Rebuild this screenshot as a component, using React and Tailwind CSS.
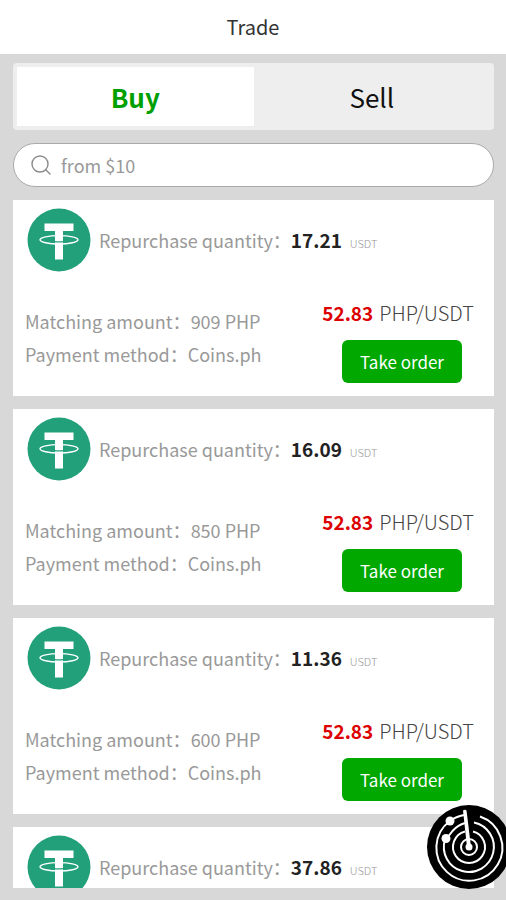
import { useState } from 'react';

const orders = [
  { id: 1, quantity: '17.21', amount: '909 PHP', method: 'Coins.ph', price: '52.83' },
  { id: 2, quantity: '16.09', amount: '850 PHP', method: 'Coins.ph', price: '52.83' },
  { id: 3, quantity: '11.36', amount: '600 PHP', method: 'Coins.ph', price: '52.83' },
  { id: 4, quantity: '37.86' },
];

function TetherIcon() {
  return (
    <svg viewBox="0 0 64 64" className="size-16 shrink-0" aria-hidden="true">
      <circle cx="32" cy="32" r="31.5" fill="#22a079" />
      <ellipse cx="32" cy="31.8" rx="19" ry="4.2" fill="none" stroke="#fff" strokeWidth="1.4" />
      <path d="M17.5 15.5h29v7.5H36v28.5h-8V23H17.5z" fill="#fff" />
      <path d="M27.5 33.6q4.5.6 9 0" fill="none" stroke="#22a079" strokeWidth="1.2" />
    </svg>
  );
}

function SearchIcon() {
  return (
    <svg viewBox="0 0 20 20" className="size-5 shrink-0" fill="none" stroke="#8c8c8c" strokeWidth="1.4" aria-hidden="true">
      <circle cx="9" cy="9" r="8" />
      <path d="M14.5 14.5l4.5 4.5" strokeLinecap="round" />
    </svg>
  );
}

function RadarIcon() {
  return (
    <svg viewBox="0 0 84 84" className="size-21" fill="none" stroke="#fff" strokeWidth="2" aria-hidden="true">
      <circle cx="42" cy="42" r="42" fill="#000" stroke="none" />
      <circle cx="42" cy="42" r="3.5" fill="#fff" stroke="none" />
      <circle cx="42" cy="42" r="8" />
      <path d="M46 26.5a16 16 0 1 1-8 0" />
      <path d="M47 17.5a25 25 0 1 1-29 17" />
      <path d="M20 33l6-7.5q5-5.5 12-7.5" />
      <path d="M53 11.5a33 33 0 1 1-30 4.5q6-4.5 14-6" />
      <path d="M36 5.5q2-1.5 3.5 0l4.5 36.5h-4z" fill="#fff" stroke="none" />
      <circle cx="23" cy="16" r="4.5" fill="#fff" stroke="none" />
      <circle cx="19" cy="33.5" r="4.5" fill="#fff" stroke="none" />
    </svg>
  );
}

function OrderCard({ order }) {
  return (
    <li className="h-49 shrink-0 bg-white pt-2">
      <div className="flex items-center pl-3.5">
        <TetherIcon />
        <p className="flex items-baseline pl-2 text-lg text-[#999]">
          Repurchase quantity：
          <strong className="text-[19px] font-bold text-[#222]">{order.quantity}</strong>
          <span className="pl-2 text-[11px] font-light">USDT</span>
        </p>
      </div>
      {order.price && (
        <div className="flex justify-between pt-[25px] pr-5 pl-3">
          <div className="pt-2 text-lg leading-[33px] text-[#999]">
            <p>Matching amount：{order.amount}</p>
            <p>Payment method：{order.method}</p>
          </div>
          <div className="flex flex-col items-end">
            <p className="flex items-baseline gap-1.5 text-xl leading-8 font-light text-[#444]">
              <strong className="text-[19px] font-bold text-[#d00]">{order.price}</strong>
              PHP/USDT
            </p>
            <button type="button" className="mt-[11px] mr-3 h-[43px] w-[120px] rounded-md bg-[#00a800] text-[17px] text-white">
              Take order
            </button>
          </div>
        </div>
      )}
    </li>
  );
}

export default function App() {
  const [tab, setTab] = useState('Buy');

  return (
    <div className="flex h-screen flex-col overflow-hidden bg-[#d8d8d8] font-['Noto_Sans_CJK_SC',sans-serif]">
      <header className="flex h-[54px] shrink-0 items-center justify-center bg-white">
        <h1 className="text-xl text-[#333]">Trade</h1>
      </header>
      <main className="flex min-h-0 flex-1 flex-col pt-[9px] pr-3 pb-3 pl-[13px]">
        <div className="flex h-[67px] shrink-0 rounded-sm bg-[#eee] p-1">
          {['Buy', 'Sell'].map((name) => (
            <button
              key={name}
              type="button"
              onClick={() => setTab(name)}
              className={
                tab === name
                  ? 'flex-1 bg-white text-[26px] font-bold text-[#00a000]'
                  : 'flex-1 text-[26px] text-[#111]'
              }
            >
              {name}
            </button>
          ))}
        </div>
        <label className="mt-[13px] flex h-11 shrink-0 items-center gap-2.5 rounded-full border border-[#aaa] bg-white px-[17px]">
          <SearchIcon />
          <input
            type="text"
            placeholder="from $10"
            aria-label="Search"
            className="min-w-0 flex-1 text-lg outline-none placeholder:text-[#999]"
          />
        </label>
        <ul className="mt-[13px] flex min-h-0 flex-1 flex-col gap-[13px] overflow-hidden">
          {orders.map((order) => (
            <OrderCard key={order.id} order={order} />
          ))}
        </ul>
      </main>
      <button type="button" aria-label="Radar" className="fixed -right-[5px] bottom-[11px] rounded-full">
        <RadarIcon />
      </button>
    </div>
  );
}
